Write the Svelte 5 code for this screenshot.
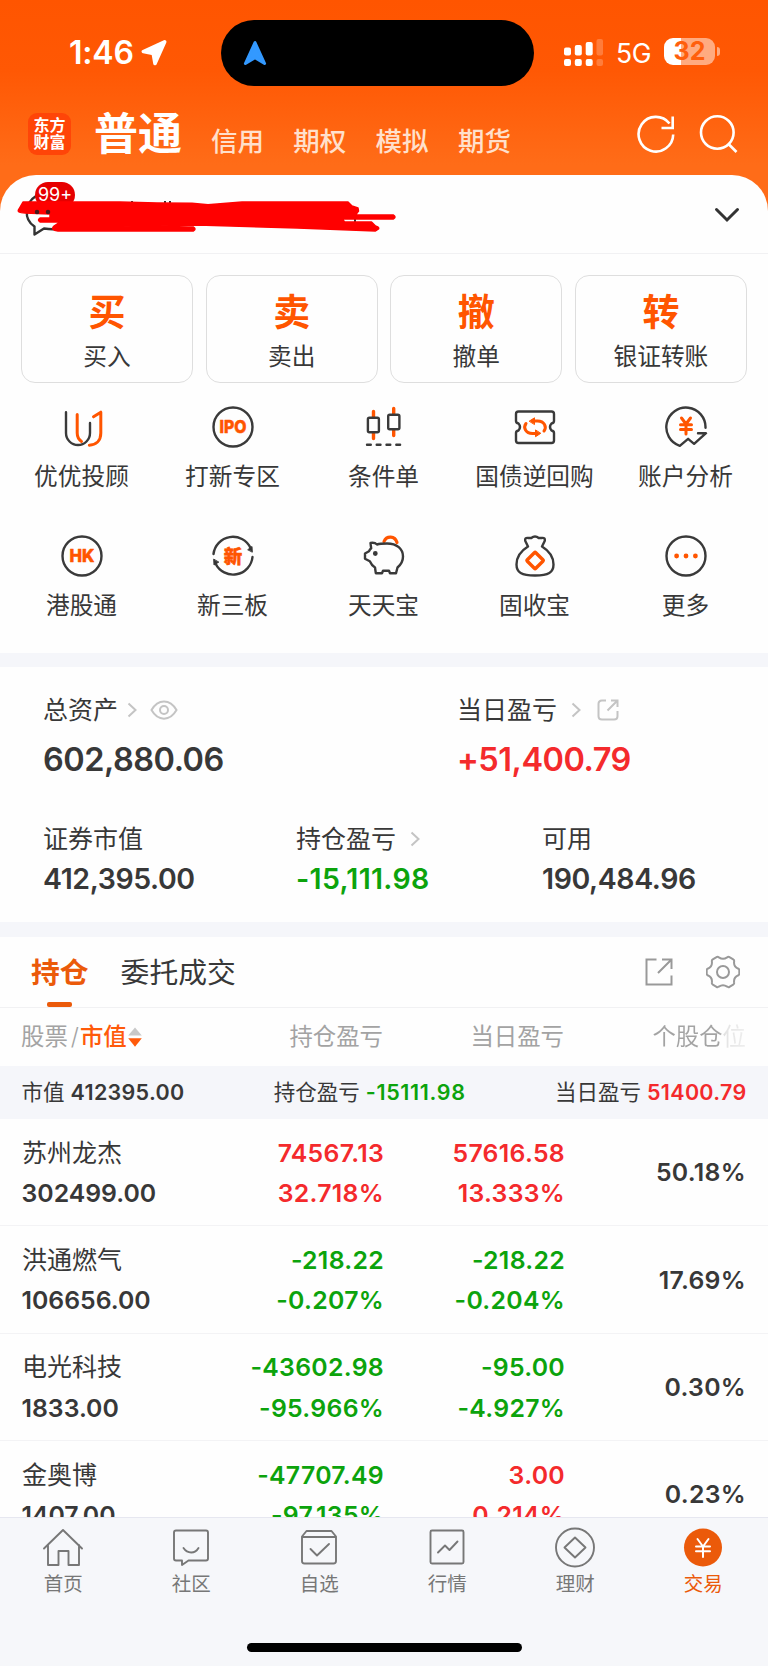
<script>
    let accountTabs = ['信用', '期权', '模拟', '期货'];

    let actions = [
        { mark: '买', label: '买入' },
        { mark: '卖', label: '卖出' },
        { mark: '撤', label: '撤单' },
        { mark: '转', label: '银证转账' }
    ];

    let shortcuts = [
        { icon: 'advisor', label: '优优投顾' },
        { icon: 'ipo', label: '打新专区' },
        { icon: 'candles', label: '条件单' },
        { icon: 'ticket', label: '国债逆回购' },
        { icon: 'analysis', label: '账户分析' },
        { icon: 'hk', label: '港股通' },
        { icon: 'neeq', label: '新三板' },
        { icon: 'pig', label: '天天宝' },
        { icon: 'bag', label: '固收宝' },
        { icon: 'more', label: '更多' }
    ];

    let holdings = [
        { name: '苏州龙杰', value: '302499.00', total: '74567.13', totalPct: '32.718%', day: '57616.58', dayPct: '13.333%', share: '50.18%' },
        { name: '洪通燃气', value: '106656.00', total: '-218.22', totalPct: '-0.207%', day: '-218.22', dayPct: '-0.204%', share: '17.69%' },
        { name: '电光科技', value: '1833.00', total: '-43602.98', totalPct: '-95.966%', day: '-95.00', dayPct: '-4.927%', share: '0.30%' },
        { name: '金奥博', value: '1407.00', total: '-47707.49', totalPct: '-97.135%', day: '3.00', dayPct: '0.214%', share: '0.23%' }
    ];

    let navItems = [
        { icon: 'home', label: '首页' },
        { icon: 'chat', label: '社区' },
        { icon: 'picks', label: '自选' },
        { icon: 'quotes', label: '行情' },
        { icon: 'wealth', label: '理财' },
        { icon: 'trade', label: '交易', active: true }
    ];

    // red for gains, green for losses
    function tone(text) {
        return text.startsWith('-') ? 'down' : 'up';
    }
</script>

<div class="phone">
    <header>
        <div class="status">
            <span class="time">1:46</span>
            <svg class="location" width="26" height="26" viewBox="0 0 26 26">
                <path d="M23.600 1.900 2.400 11.600l9.900 2L14 23.500z" fill="#fff" stroke="#fff" stroke-width="3.600" stroke-linejoin="round" />
            </svg>
            <div class="island">
                <svg width="24" height="26" viewBox="0 0 24 26">
                    <path d="M12 2.500 2.400 23.500 12 17.800 21.600 23.500z" fill="#3399ff" stroke="#3399ff" stroke-width="3" stroke-linejoin="round" />
                </svg>
            </div>
            <svg class="signal" width="40" height="28" viewBox="0 0 40 28" fill="#fff">
                <rect x="0" y="8.500" width="7" height="8" rx="2" />
                <rect x="10.800" y="6" width="7" height="10.500" rx="2" />
                <rect x="21.700" y="3" width="7" height="13.500" rx="2" />
                <rect x="0" y="20" width="7" height="7" rx="2" />
                <rect x="10.800" y="20" width="7" height="7" rx="2" />
                <rect x="21.700" y="20" width="7" height="7" rx="2" />
                <g opacity=".22">
                    <rect x="32.500" y="0" width="6.500" height="16.500" rx="2" />
                    <rect x="32.500" y="20" width="6.500" height="7" rx="2" />
                </g>
            </svg>
            <span class="network">5G</span>
            <div class="battery"><span>32</span></div>
            <i class="nub"></i>
        </div>

        <div class="account-bar">
            <div class="logo"><span>东方</span><span>财富</span></div>
            <h1>普通</h1>
            <nav>
                {#each accountTabs as tab}
                    <span>{tab}</span>
                {/each}
            </nav>
            <svg class="refresh" width="40" height="40" viewBox="0 0 40 40" fill="none" stroke="#fff" stroke-width="2.600">
                <path d="M37.200 20.500A17.300 17.300 0 1 1 33.500 9.500" />
                <path d="M36.700 2.500v11.500H25.500" />
            </svg>
            <svg class="search" width="40" height="40" viewBox="0 0 40 40" fill="none" stroke="#fff" stroke-width="2.600">
                <circle cx="18.300" cy="18.500" r="16.300" />
                <path d="m29.500 30 8 8" />
            </svg>
        </div>
    </header>

    <main>
        <div class="user">
            <svg class="bubble" width="54" height="54" viewBox="24 188 54 54" fill="none" stroke="#333" stroke-width="2.400" stroke-linejoin="round">
                <path d="M37 196c-11 7-13 23-1.500 30.500v8l9.500-6c8 1.300 18 1.300 24-4" />
            </svg>
            <span class="badge">99+</span>
            <svg class="marker" width="768" height="78" viewBox="0 175 768 78">
                <path d="M132 201v2M165 201v2M170 201v2M149 225v2M172 225v2M355 215v7" stroke="#333" stroke-width="2" />
                <path d="M23 202h97l37 1 35 .2 16 1.500 34-2.700h106l4 4 6 2 .5 3-3 4h38q3 2 0 4h-51l2 3h27l4 4q4 1 3 3l-3 2-78-3-100-3-75 2h71q3 2 0 4H58q-8-1-4-5l6-4H40q-3-2 0-4h10v-4l-25-1q-9 0-6-4z" fill="red" stroke="red" stroke-width="1.500" stroke-linejoin="round" />
                <path d="M37 212h.01M48 212h.01" stroke="#44181a" stroke-width="4.500" stroke-linecap="round" />
            </svg>
            <svg class="down-arrow" width="26" height="16" viewBox="0 0 26 16" fill="none" stroke="#333" stroke-width="3" stroke-linecap="round">
                <path d="M2.500 2.500 13 13 23.500 2.500" />
            </svg>
        </div>

        <section class="actions">
            {#each actions as action}
                <div class="action">
                    <b>{action.mark}</b>
                    <span>{action.label}</span>
                </div>
            {/each}
        </section>

        <section class="shortcuts">
            {#each shortcuts as item}
                <div class="shortcut">
                    <svg width="44" height="44" viewBox="0 0 44 44" fill="none" stroke="#3a3a3a" stroke-width="2.400" stroke-linecap="round" stroke-linejoin="round">
                        {#if item.icon === 'advisor'}
                            <path d="M6 7.200V28a12 12 0 0 0 24 0V18" />
                            <path class="accent" stroke-width="3" d="M17.200 9.500v18.500c0 4 1.500 6.500 4.300 8.500M33.500 11.800l7.300-4.600V28c0 8-5 12-11.500 12.200" />
                        {:else if item.icon === 'ipo'}
                            <circle cx="22" cy="22" r="19.500" />
                            <text x="22" y="28" font-size="17.500" textLength="27" lengthAdjust="spacingAndGlyphs">IPO</text>
                        {:else if item.icon === 'candles'}
                            <path class="accent" stroke-width="3.400" d="M11.500 6.500V12M11.500 28v5.500M31.700 3.500V9M31.700 25.500v5" />
                            <rect x="5.900" y="12.800" width="11" height="14.500" rx="1.500" />
                            <rect x="26.200" y="9.700" width="11.200" height="14.500" rx="1.500" />
                            <path d="M5 39.700h3.800M14.700 39.700h3.800M24.500 39.700h3.800M34.300 39.700h3.800" />
                        {:else if item.icon === 'ticket'}
                            <path d="M5.500 6.500h33q2.500 0 2.500 2.500v7q0 2-2.500 2.500-3 3.500 0 7 2.500.5 2.500 2.500v7.500q0 2.500-2.500 2.500h-33Q3 38 3 35.500V28q0-2 2.500-2.500 3-3.500 0-7Q3 18 3 16V9q0-2.500 2.500-2.500z" />
                            <path class="accent" stroke-width="3" d="M20 16h4.500c7 0 9.500 6 6.500 10M24 28.500h-4.500c-7 0-9.500-6-6.500-10" />
                            <path class="accent fill" stroke-width="1" d="m16.500 16 5-3.200v6.400zM27.500 28.500l-5 3.200v-6.400z" />
                        {:else if item.icon === 'analysis'}
                            <path d="M41.500 22.700A19.600 19.600 0 1 0 15.800 40.800l8.300-7 6 5L42 28.200h-8" />
                            <path class="accent" stroke-width="3" d="m17.500 13 4.500 6 4.500-6M22 19v10M16.500 19.800h11M16.500 24.500h11" />
                        {:else if item.icon === 'hk'}
                            <circle cx="22" cy="22" r="19.500" />
                            <text x="22" y="28.300" font-size="17.500" textLength="25" lengthAdjust="spacingAndGlyphs">HK</text>
                        {:else if item.icon === 'neeq'}
                            <path d="M2.500 20A19.500 19.500 0 0 1 39.500 14M41.500 23A19.500 19.500 0 0 1 4.500 29.500" />
                            <path class="dark" stroke-width="1" d="m37 15.500 4-3 .3 5.300zM7.500 28.300l-4.500 2.700-.3-5.500z" />
                            <text x="22" y="28.500" font-size="18.500">新</text>
                        {:else if item.icon === 'pig'}
                            <path class="accent" stroke-width="3.200" d="M22 7.500c2.500-6 11-6 13 1" />
                            <path d="M8.500 9c3-.5 5 0 6.500 1.500 2-.7 5-1 10-1 10 0 16 5.500 16 13 0 5-2.500 8.500-5.500 11L34 39.200h-6l-1-2.400h-6l-1 2.400h-6.200L13 33.500c-2.500-1.500-4-3.500-5.200-6.200L3 24.700v-5.200l4-2.200c.6-1.300 1.200-2.200 2.200-3z" />
                            <circle class="dark" cx="13.300" cy="19.500" r="1.200" />
                        {:else if item.icon === 'bag'}
                            <path d="M15 12.500 12.300 7q-.8-3.600 3-3h3q3.700-3 7.400 0h3q3.800-.6 3 3L29 12.500c6.500 4 11.500 9.500 11.500 18 0 8-5 11-18.500 11S3.500 38.500 3.500 30.500c0-8.500 5-14 11.500-18z" />
                            <rect class="accent" stroke-width="3.400" x="16.100" y="20.500" width="12" height="12" rx="1" transform="rotate(45 22.100 26.500)" />
                        {:else}
                            <circle cx="22" cy="22" r="19.500" />
                            <path class="accent" stroke-width="4.800" d="M12.600 22h.01M22 22h.01M31.400 22h.01" />
                        {/if}
                    </svg>
                    <span>{item.label}</span>
                </div>
            {/each}
        </section>

        <section class="assets">
            <div class="asset-row top">
                <div>
                    <p>总资产
                        <svg class="chev" width="10" height="16" viewBox="0 0 10 16"><path d="m1.500 1.500 7 6.500-7 6.500" /></svg>
                        <svg class="eye" width="28" height="20" viewBox="0 0 28 20"><path d="M1.500 10C8-1.500 20-1.500 26.500 10 20 21.500 8 21.500 1.500 10z" /><circle cx="14" cy="10" r="4" /></svg>
                    </p>
                    <strong>602,880.06</strong>
                </div>
                <div>
                    <p>当日盈亏
                        <svg class="chev far" width="10" height="16" viewBox="0 0 10 16"><path d="m1.500 1.500 7 6.500-7 6.500" /></svg>
                        <svg class="share" width="22" height="22" viewBox="0 0 22 22"><path d="M9 1.500H5Q1.500 1.500 1.500 5v12q0 3.500 3.500 3.500h12q3.500 0 3.500-3.500v-5M14 1.500h6.500V8M20 2l-9.500 9.500" /></svg>
                    </p>
                    <strong class="up">+51,400.79</strong>
                </div>
            </div>
            <div class="asset-row bottom">
                <div><p>证券市值</p><strong>412,395.00</strong></div>
                <div>
                    <p>持仓盈亏
                        <svg class="chev far" width="10" height="16" viewBox="0 0 10 16"><path d="m1.500 1.500 7 6.500-7 6.500" /></svg>
                    </p>
                    <strong class="down">-15,111.98</strong>
                </div>
                <div><p>可用</p><strong>190,484.96</strong></div>
            </div>
        </section>

        <section class="positions">
            <div class="tabs">
                <span class="tab active">持仓</span>
                <span class="tab">委托成交</span>
                <svg class="export" width="28" height="28" viewBox="0 0 28 28"><path d="M11.500 1.500h-10v25h25v-9M17 1.500h9.500V11M26 2 13 15" /></svg>
                <svg class="gear" width="34" height="34" viewBox="0 0 34 34">
                    <path d="M10.500 2.200q1.200-.8 2.400.2 4.100 2.800 8.200 0 1.200-1 2.400-.2l3.700 2.200q1.300.8.900 2.200-.6 5.200 4.300 7.100 1 .6.900 1.800v3q.1 1.200-.9 1.800-4.900 1.900-4.300 7.100.4 1.400-.9 2.200l-3.700 2.200q-1.200.8-2.400-.2-4.100-2.800-8.200 0-1.200 1-2.400.2l-3.700-2.200q-1.300-.8-.9-2.200.6-5.200-4.300-7.100-1-.6-.9-1.800v-3q-.1-1.200.9-1.800 4.900-1.900 4.300-7.100-.4-1.400.9-2.200z" />
                    <circle cx="17" cy="17" r="6" />
                </svg>
            </div>

            <div class="grid head">
                <div class="sort">股票<em>/</em><b>市值</b>
                    <svg width="14" height="20" viewBox="0 0 14 20"><path d="M7 .5 13.800 8.500H.2z" fill="#c8c8c8" /><path d="M7 19.800.2 11.200h13.600z" fill="#ff5a0a" /></svg>
                </div>
                <span>持仓盈亏</span>
                <span>当日盈亏</span>
                <span class="fade">个股仓位</span>
            </div>

            <div class="summary">
                <span>市值 <b>412395.00</b></span>
                <span>持仓盈亏 <b class="down">-15111.98</b></span>
                <span>当日盈亏 <b class="up">51400.79</b></span>
            </div>

            {#each holdings as row}
                <div class="grid row">
                    <div class="pair left"><span class="name">{row.name}</span><b>{row.value}</b></div>
                    <div class="pair {tone(row.total)}"><b>{row.total}</b><b>{row.totalPct}</b></div>
                    <div class="pair {tone(row.day)}"><b>{row.day}</b><b>{row.dayPct}</b></div>
                    <b>{row.share}</b>
                </div>
            {/each}
        </section>
    </main>

    <footer>
        <nav class="bottom-nav">
            {#each navItems as item}
                <div class="nav-item" class:active={item.active}>
                    <svg width="42" height="42" viewBox="0 0 42 42" fill="none" stroke="#777" stroke-width="1.900" stroke-linejoin="round" stroke-linecap="round">
                        {#if item.icon === 'home'}
                            <path d="M2 21.500 21 3l19 18.500M6 18v20h10.500V24h10v14H37V18" />
                        {:else if item.icon === 'chat'}
                            <path d="M6 3.500h30q2 0 2 2v26q0 2-2 2H18.500L12 38v-4.500H6q-2 0-2-2v-26q0-2 2-2zM13.500 21c4 6 11.500 6 15 0" />
                        {:else if item.icon === 'picks'}
                            <path d="M4 9.500 8.500 4h25L38 9.500V34q0 2.500-2.500 2.500h-29Q4 36.500 4 34zM4 10h34M12.500 22l6.500 6.500L31 17" />
                        {:else if item.icon === 'quotes'}
                            <rect x="4.500" y="3.500" width="33" height="33" rx="1.500" />
                            <path d="m12 25.500 7-7 4.500 4.500 8-8.500" />
                        {:else if item.icon === 'wealth'}
                            <circle cx="21" cy="20.500" r="19" />
                            <path d="M21 10.500 31.500 20.500 21 30.500 10.500 20.500z" />
                        {:else}
                            <circle cx="21" cy="20.500" r="19" fill="#eb5a0a" stroke="none" />
                            <path stroke="#fff" stroke-width="2" d="m15.500 12 5.500 7.500 5.500-7.500M21 19.500V30M14 19.500h14M14 24.300h14" />
                        {/if}
                    </svg>
                    <span>{item.label}</span>
                </div>
            {/each}
        </nav>
        <div class="home-bar"></div>
    </footer>
</div>

<style>
    :global(body) {
        margin: 0;
        background: #fefefe;
    }

    .phone {
        width: 768px;
        height: 1666px;
        display: flex;
        flex-direction: column;
        overflow: hidden;
        background: linear-gradient(#ff5500 0, #ff5804 70px, #ff6c18 165px, #ff6c18 100%);
        font-family: Inter, "Noto Sans CJK SC", sans-serif;
        color: #383838;
        line-height: 1.2;
    }

    svg {
        flex: none;
        display: block;
    }

    header {
        height: 175px;
        flex: none;
        color: #fff;
    }

    .status {
        height: 106px;
        display: flex;
        align-items: center;
        padding-left: 69px;
    }

    .time {
        font-size: 32px;
        font-weight: 600;
        width: 72px;
        letter-spacing: -.2px;
    }

    .location {
        margin-right: 54px;
    }

    .island {
        width: 313px;
        height: 66px;
        border-radius: 33px;
        background: #000;
        display: flex;
        align-items: center;
        padding-left: 22px;
        box-sizing: border-box;
        flex: none;
    }

    .signal {
        margin-left: 30px;
    }

    .network {
        font-size: 26.500px;
        margin-left: 12px;
        width: 48px;
        padding-top: 1px;
        letter-spacing: -.3px;
        box-sizing: border-box;
    }

    .battery {
        width: 51px;
        height: 27px;
        border-radius: 9px;
        background: linear-gradient(90deg, #fff 33%, #ffab80 33%);
        color: #ff5f0d;
        font-size: 25px;
        font-weight: 700;
        text-align: center;
        line-height: 27px;
        flex: none;
        margin-top: -3px;
    }

    .nub {
        width: 3px;
        height: 9px;
        margin: -3px 0 0 2px;
        border-radius: 0 4px 4px 0;
        background: #ffab80;
    }

    .account-bar {
        height: 69px;
        display: flex;
        padding-left: 28px;
    }

    .logo {
        width: 43px;
        height: 42px;
        margin-top: 7px;
        border-radius: 9px;
        background: #ff4508;
        display: flex;
        flex-direction: column;
        align-items: center;
        justify-content: center;
        font-size: 16px;
        font-weight: 700;
        line-height: 17.500px;
    }

    h1 {
        margin: 1px 0 0 23px;
        font-size: 44px;
        line-height: 54px;
        font-weight: 700;
        width: 117px;
    }

    header nav {
        display: flex;
        gap: 29.300px;
        font-size: 26.500px;
        font-weight: 500;
        line-height: 32px;
        margin-top: 18.500px;
        width: 425px;
        color: #ffe0cc;
    }

    .refresh {
        margin-top: 8px;
    }

    .search {
        margin: 8px 0 0 23px;
    }

    main {
        flex: 1;
        min-height: 0;
        overflow: hidden;
        background: #fefefe;
        border-radius: 36px 36px 0 0;
    }

    .user {
        position: relative;
        height: 79px;
        border-bottom: 1.500px solid #f1f1f3;
        box-sizing: border-box;
        display: flex;
        align-items: center;
        justify-content: flex-end;
        padding: 0 28px 0 24px;
    }

    .bubble {
        margin: 2px auto 0 -1px;
    }

    .badge {
        position: absolute;
        left: 35px;
        top: 7px;
        width: 40px;
        height: 26px;
        border-radius: 13px;
        background: #e60000;
        color: #fff;
        font-size: 18px;
        line-height: 26px;
        text-align: center;
    }

    .marker {
        position: absolute;
        left: 0;
        top: 0;
    }

    .down-arrow {
        margin-top: 1px;
    }

    .actions {
        display: grid;
        grid-template-columns: repeat(4, 1fr);
        gap: 12.500px;
        padding: 21px 21px 0;
    }

    .action {
        height: 108px;
        border: 1.500px solid #dedede;
        border-radius: 14px;
        box-sizing: border-box;
        display: flex;
        flex-direction: column;
        align-items: center;
        padding-top: 15px;
    }

    .action b {
        color: #ff5500;
        font-size: 37px;
        line-height: 44px;
        font-weight: 700;
    }

    .action span,
    .shortcut span {
        font-size: 23.700px;
        line-height: 28px;
    }

    .action span {
        margin-top: 8px;
    }

    .shortcuts {
        display: grid;
        grid-template-columns: repeat(5, 151px);
        grid-auto-rows: 129px;
        padding: 22px 6px 0;
        height: 248px;
    }

    .shortcut {
        display: flex;
        flex-direction: column;
        align-items: center;
        gap: 14px;
        white-space: nowrap;
    }

    .accent {
        stroke: #ff5500;
    }

    .fill {
        fill: #ff5500;
    }

    .dark {
        fill: #333;
    }

    .shortcut text {
        fill: #ff5500;
        stroke: #ff5500;
        stroke-width: .5;
        font-weight: 800;
        text-anchor: middle;
    }

    .assets {
        height: 255px;
        border: solid #f5f6fa;
        border-width: 14px 0 15px;
    }

    .asset-row {
        display: grid;
        padding: 0 43px;
    }

    .asset-row p {
        margin: 0;
        font-size: 25px;
        line-height: 30px;
        display: flex;
        align-items: center;
        white-space: nowrap;
    }

    .asset-row strong {
        display: block;
        font-weight: 600;
    }

    .top {
        grid-template-columns: 414px auto;
        padding-top: 28px;
    }

    .top strong {
        font-size: 32.500px;
        line-height: 40px;
        margin-top: 15px;
        letter-spacing: -.5px;
    }

    .bottom {
        grid-template-columns: 253px 246px auto;
        padding-top: 44px;
    }

    .bottom strong {
        font-size: 28.500px;
        line-height: 34px;
        margin-top: 8px;
        letter-spacing: -.4px;
    }

    .bottom strong.down {
        letter-spacing: .3px;
    }

    .assets svg {
        fill: none;
        stroke: #c4c4c4;
        stroke-width: 2;
    }

    .chev {
        margin-left: 9px;
    }

    .far {
        margin-left: 14px;
    }

    .eye {
        margin-left: 13px;
    }

    .share {
        margin-left: 16px;
    }

    .up {
        color: #f42a2c;
    }

    .down {
        color: #0ca30c;
    }

    .tabs {
        height: 71px;
        box-sizing: border-box;
        border-bottom: 1.500px solid #f1f1f3;
        display: flex;
        align-items: center;
        padding: 0 28px 0 31px;
        font-size: 28.800px;
    }

    .tab {
        height: 70px;
        line-height: 71px;
        margin-right: 32px;
        position: relative;
    }

    .tab.active {
        color: #eb5a0a;
        font-weight: 700;
    }

    .tab.active::after {
        content: "";
        position: absolute;
        left: 16px;
        bottom: 0;
        width: 25px;
        height: 5px;
        border-radius: 2px;
        background: #eb5a0a;
    }

    .tabs svg {
        fill: none;
        stroke: #999;
        stroke-width: 2;
    }

    .export {
        margin-left: auto;
    }

    .gear {
        margin-left: 33px;
    }

    .grid {
        display: grid;
        grid-template-columns: 182px 180px 181px 181px;
        padding: 0 22px;
        align-items: center;
        text-align: right;
    }

    .head {
        height: 58px;
        padding-top: 1px;
        box-sizing: border-box;
        font-size: 23.400px;
        color: #a3a3a3;
    }

    .head > span {
        margin-right: 1px;
    }

    .sort {
        display: flex;
        align-items: center;
        white-space: nowrap;
        margin-left: -1px;
    }

    .sort em {
        font-style: normal;
        font-weight: 300;
        margin: 0 1px 0 3px;
    }

    .sort b {
        color: #ff5a0a;
        font-weight: 500;
        margin-right: 1px;
    }

    .head .fade {
        background: linear-gradient(90deg, #a3a3a3 72%, #e4e4e4 78%, #eeeeee);
        background-size: 96px 100%;
        background-position: right;
        background-repeat: no-repeat;
        background-clip: text;
        color: transparent;
        margin-right: 0;
    }

    .summary {
        height: 53px;
        padding: 1px 21.500px 0;
        box-sizing: border-box;
        background: #f5f6fa;
        display: flex;
        align-items: center;
        justify-content: space-between;
        font-size: 21.500px;
    }

    .summary b,
    .row b {
        font-weight: 600;
        letter-spacing: .3px;
    }

    .summary .down {
        letter-spacing: .65px;
    }

    .row {
        height: 107.300px;
        box-sizing: border-box;
        border-bottom: 1.500px solid #f3f3f5;
        padding: 2px 21.500px 0 22px;
        font-size: 24.800px;
    }

    .pair {
        display: flex;
        flex-direction: column;
        line-height: 40.500px;
    }

    .left {
        text-align: left;
        white-space: nowrap;
    }

    .row .left b {
        letter-spacing: 0;
        margin-left: -.5px;
    }

    .name {
        font-size: 25px;
    }

    footer {
        height: 149px;
        flex: none;
        box-sizing: border-box;
        background: #f6f7fa;
        border-top: 1px solid #e6e7f0;
    }

    .bottom-nav {
        display: grid;
        grid-template-columns: repeat(6, 128px);
        height: 125px;
        margin-left: -.7px;
    }

    .nav-item {
        display: flex;
        flex-direction: column;
        align-items: center;
        padding-top: 9px;
        gap: 3px;
        font-size: 19.500px;
        line-height: 24px;
        color: #777;
    }

    .nav-item.active {
        color: #eb5a0a;
    }

    .home-bar {
        width: 275px;
        height: 9px;
        border-radius: 5px;
        background: #000;
        margin: 0 auto;
    }
</style>
